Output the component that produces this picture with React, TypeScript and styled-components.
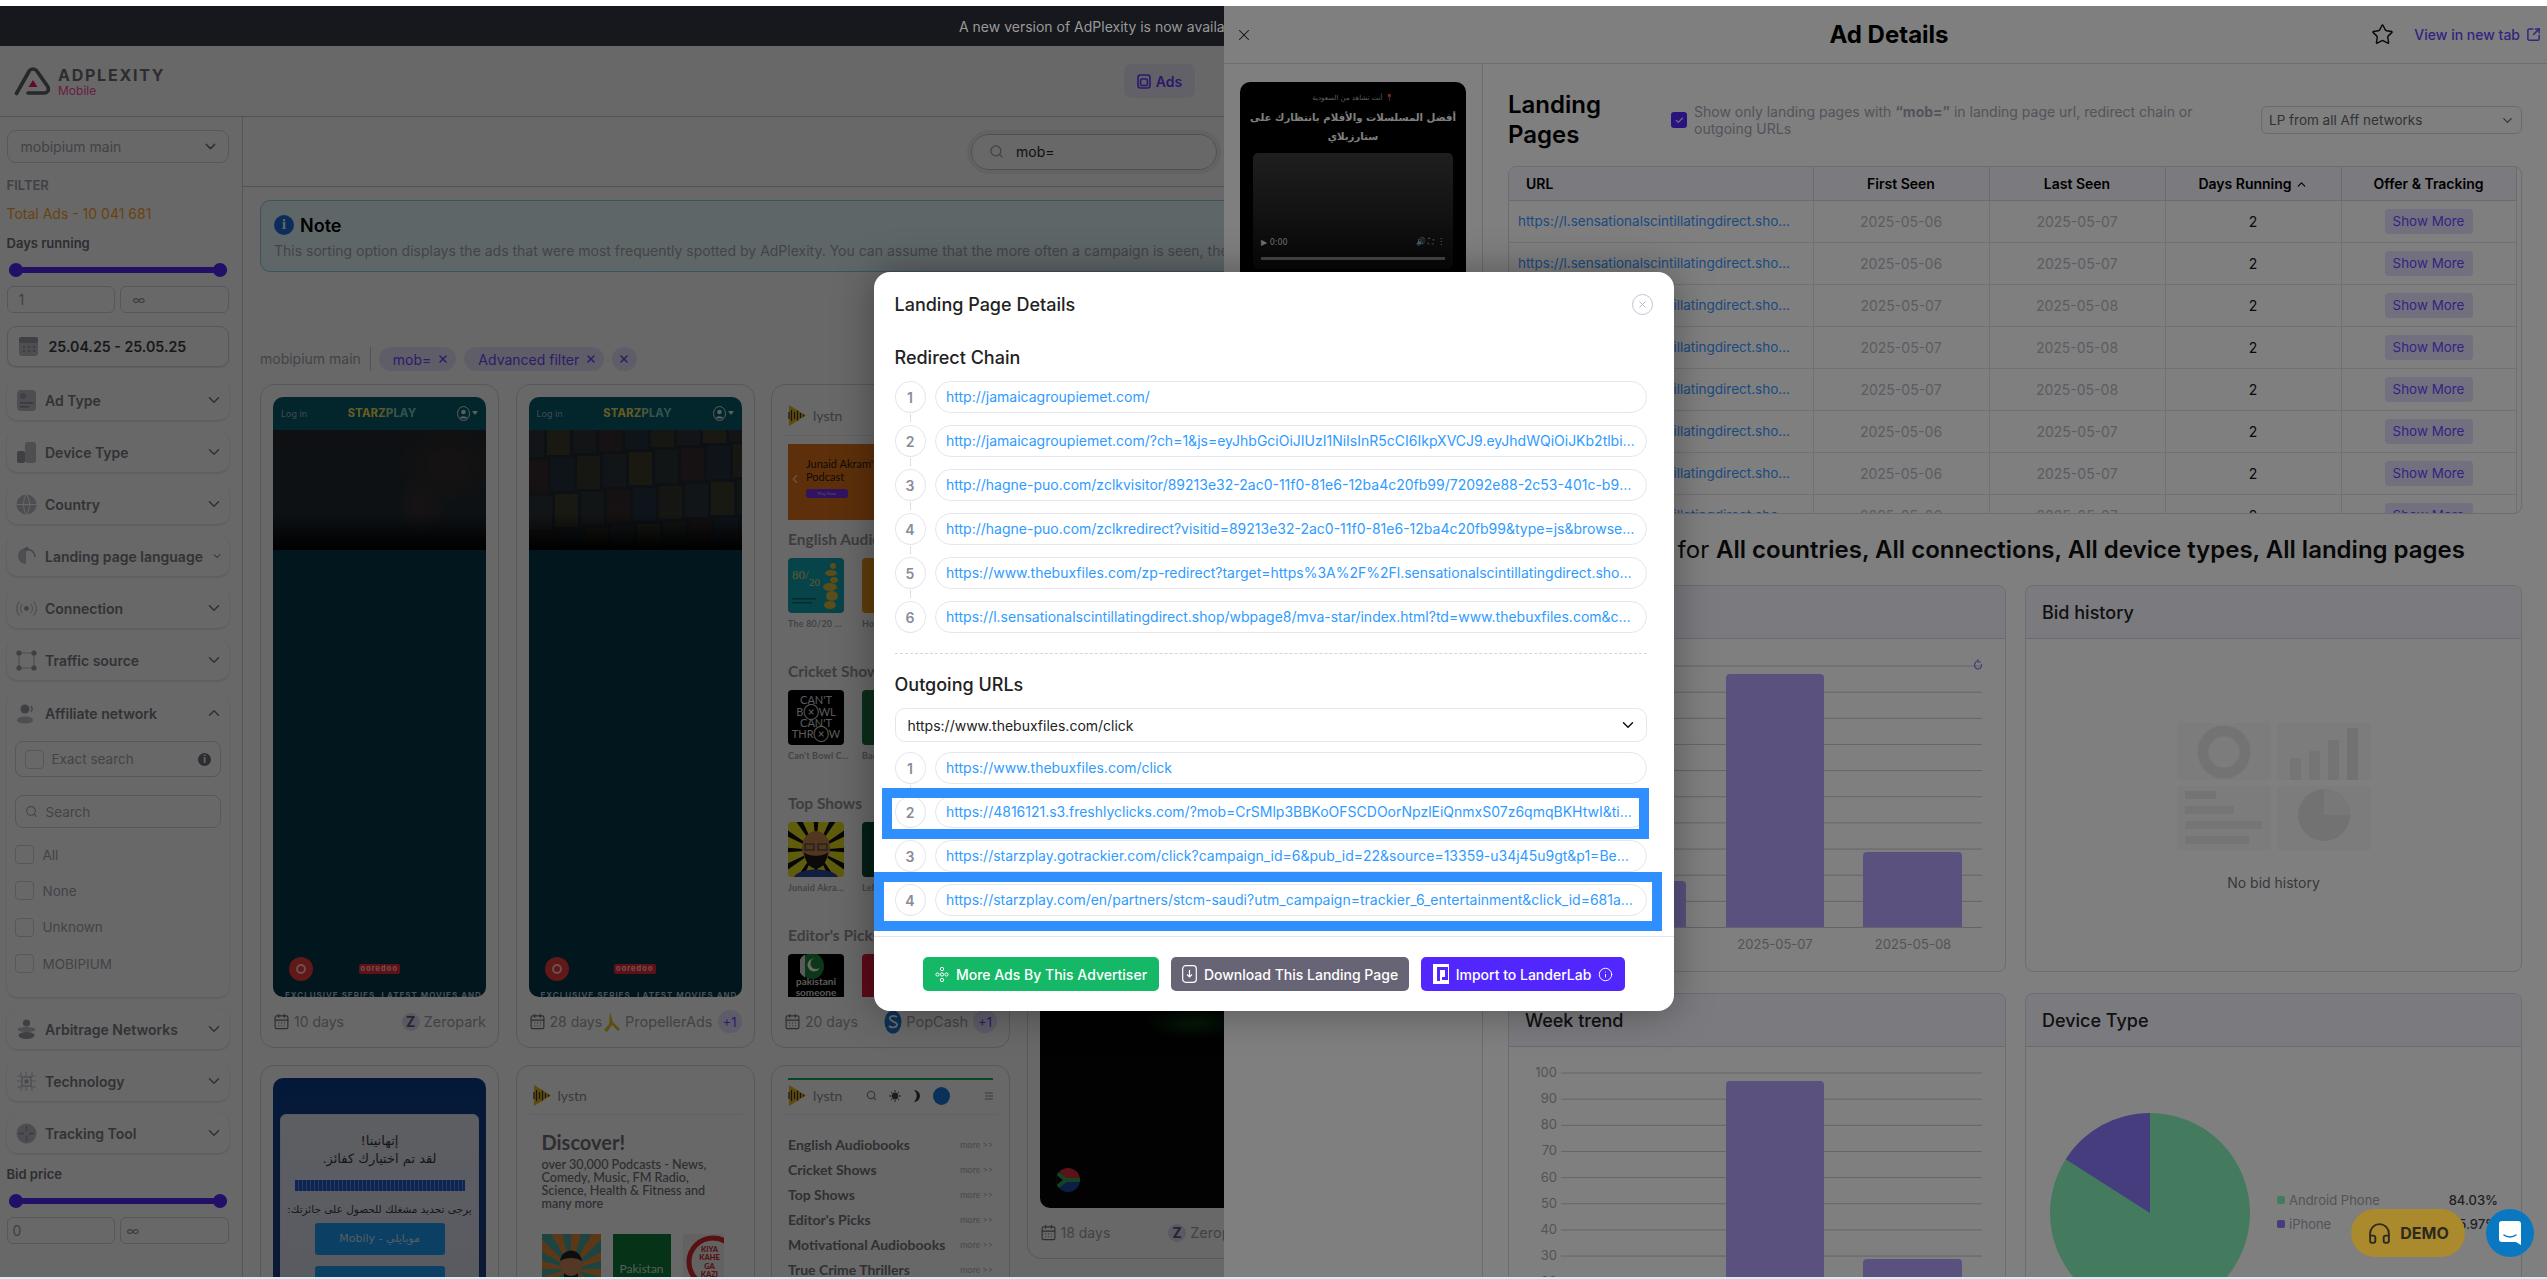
import React from 'react';
import styled, { createGlobalStyle } from 'styled-components';
import { ChevronDown, ChevronUp, ChevronLeft, Search, X, Star, SquareArrowOutUpRight, Headphones, CalendarDays, Info, ChevronUp as SortUp } from 'lucide-react';

const Global = createGlobalStyle`
  html, body { margin: 0; padding: 0; background: #fff; overflow: hidden; }
  * { box-sizing: border-box; }
  #root { font-family: Inter, "Noto Sans", sans-serif; font-size: 14px; color: #111; }
`;

const Viewport = styled.div`position: relative; width: 2547px; height: 1271px; margin-top: 6px; overflow: hidden; background: #fff;`;
const BottomStrip = styled.div`height: 2px; background: #d6edf6;`;
const LeftPage = styled.div`width: 2547px; height: 1271px; display: flex; flex-direction: column; padding-top: 40px; background: #fff;`;
const LeftDim = styled.div`position: absolute; inset: 0; background: rgba(0,0,0,.18);`;
const Banner = styled.div`position: absolute; top: 0; left: 0; width: 1224px; height: 40px; overflow: hidden; background: #17171e; color: #999; display: flex; align-items: center; padding-left: 959px; font-size: 14px; white-space: nowrap;`;

const Header = styled.header`height: 71px; flex: none; display: grid; grid-template-columns: 1124px 71px; align-items: center; border-bottom: 1px solid #c8c8ce;`;
const Brand = styled.div`display: flex; align-items: center; gap: 6px; padding-left: 14px;`;
const BrandText = styled.div`display: flex; flex-direction: column;`;
const BrandName = styled.div`font-size: 16px; font-weight: 700; letter-spacing: 1.75px; line-height: 18px; color: #6e6e78;`;
const BrandSub = styled.div`font-size: 12px; line-height: 13px; color: #ff4a9f;`;
const AdsButton = styled.div`height: 34px; border-radius: 7px; background: #f0eeff; display: flex; align-items: center; justify-content: center; gap: 5px; color: #6a3cff; font-weight: 600; font-size: 14px;`;

const Body = styled.div`flex: 1; display: flex; min-height: 0;`;
const Sidebar = styled.aside`width: 243px; flex: none; border-right: 1px solid #d0d0d8; padding: 13px 13px 0 6.5px; display: flex; flex-direction: column;`;
const Select = styled.div`height: 33px; flex: none; border: 1px solid #d5d5de; border-radius: 9px; display: flex; align-items: center; justify-content: space-between; padding: 0 9px 0 13px; color: #a2a2b0; font-size: 14px;`;
const FilterLabel = styled.div`margin-top: 13px; font-size: 13px; line-height: 18px; font-weight: 600; color: #a0a0ac;`;
const TotalAds = styled.div`margin-top: 11px; line-height: 18px; font-size: 14px; color: #ffa52a;`;
const RangeLabel = styled.div<{ $top: number }>`margin-top: ${p => p.$top}px; line-height: 18px; font-size: 13px; font-weight: 600; color: #6f6f7a;`;
const SliderBox = styled.div`margin: 11px 0 0 0; height: 14px; padding: 0 2.5px; display: flex; align-items: center;`;
const SliderTrack = styled.div`flex: 1; height: 6px; border-radius: 3px; background: #5227ff; display: flex; align-items: center; justify-content: space-between;`;
const SliderKnob = styled.div`width: 14px; height: 14px; border-radius: 50%; background: #5227ff;`;
const RangeInputs = styled.div`margin-top: 9px; display: grid; grid-template-columns: 1fr 1fr; gap: 5px;`;
const RangeInput = styled.div<{ $pad: number }>`height: 27px; border: 1px solid #d5d5de; border-radius: 6px; display: flex; align-items: center; padding-left: ${p => p.$pad}px; font-size: 14px; color: #9a9aa4;`;
const DateBox = styled.div`margin-top: 13px; height: 41px; flex: none; border: 1px solid #d5d5de; border-radius: 9px; box-shadow: 0 1px 2px rgba(0,0,0,.1); display: flex; align-items: center; gap: 10px; padding-left: 10px; font-weight: 600; font-size: 14.2px; color: #3c3c44;`;
const Accordion = styled.div<{ $top: number; $h?: number }>`margin-top: ${p => p.$top}px; height: ${p => p.$h ?? 40}px; flex: none; border-radius: 10px; box-shadow: 0 1px 3px rgba(0,0,0,.16); background: #fff;`;
const AccordionHead = styled.div`height: 40px; display: flex; align-items: center; padding: 0 6px 0 9.5px; gap: 8px;`;
const AccordionLabel = styled.div`flex: 1; font-size: 14px; font-weight: 600; color: #7c7c86; white-space: nowrap;`;
const SoftBox = styled.div<{ $top: number; $h: number }>`margin: ${p => p.$top}px 8px 0; height: ${p => p.$h}px; border: 1px solid #d5d5de; border-radius: 8px; display: flex; align-items: center; padding: 0 9px; gap: 8px; color: #a4a4b0; font-size: 13.5px;`;
const Check = styled.div`width: 19px; height: 19px; flex: none; border: 1px solid #d5d5de; border-radius: 4px;`;
const BoxText = styled.span`flex: 1;`;
const CheckList = styled.div`margin: 17px 8px 0; display: flex; flex-direction: column; gap: 17px;`;
const CheckRow = styled.div`height: 19.3px; display: flex; align-items: center; gap: 9px; color: #a4a4b0; font-size: 13.5px;`;
const RoundInfo = styled.div`width: 13px; height: 13px; border-radius: 50%; background: #70707a; color: #fff; font-size: 10px; font-weight: 700; display: flex; align-items: center; justify-content: center;`;
const IcoSvg = styled.svg`flex: none;`;

const Main = styled.main`flex: 1; min-width: 0; display: flex; flex-direction: column; overflow: hidden;`;
const SearchRow = styled.div`height: 70px; flex: none; border-bottom: 1px solid #c8c8d0; display: flex; align-items: center; padding-left: 728px;`;
const SearchPill = styled.div`width: 246px; height: 36px; border: 1px solid #c4c4ca; border-radius: 18px; box-shadow: 0 0 0 4px #f1f1f1; display: flex; align-items: center; gap: 12px; padding-left: 17px; font-size: 14px; color: #2a2a2a;`;
const Note = styled.div`margin: 13px 0 0 17px; width: 2400px; height: 72px; flex: none; background: #e8f9ff; border: 1px solid #8bcbe8; border-radius: 10px; padding: 12px 13px;`;
const NoteHead = styled.div`display: flex; align-items: center; gap: 6px; height: 24px; font-size: 18px; font-weight: 600; color: #000;`;
const NoteIcon = styled.div`width: 20px; height: 20px; border-radius: 50%; background: #1f6fe0; color: #fff; font: 700 14px "Liberation Serif", serif; display: flex; align-items: center; justify-content: center;`;
const NoteText = styled.div`margin-top: 5px; color: #a6a6ac; font-size: 14px; white-space: nowrap;`;
const ChipRow = styled.div`margin: 75px 0 0 17px; height: 24px; flex: none; display: flex; align-items: center; gap: 8px;`;
const ChipLead = styled.div`padding-right: 9px; height: 24px; line-height: 24px; border-right: 1px solid #c8c8d0; color: #a4a4ae; font-size: 14px;`;
const Chip = styled.div<{ $pad: number }>`height: 24px; border-radius: 12px; background: #eae6ff; display: flex; align-items: center; gap: 6px; padding: 0 7px 0 ${p => p.$pad}px; font-size: 14px; color: #7044ff;`;
const Columns = styled.div`margin: 12.5px 0 0 17px; display: flex; gap: 16.5px; align-items: flex-start;`;
const Column = styled.div`width: 239px; flex: none; display: flex; flex-direction: column; gap: 17px;`;
const AdCard = styled.article`width: 239px; flex: none; border: 1px solid #d7d7e0; border-radius: 14px; padding: 12px 12px 0; background: #fff;`;
const Shot = styled.div<{ $h: number }>`position: relative; height: ${p => p.$h}px; border-radius: 10px; overflow: hidden; display: flex; flex-direction: column;`;
const CongratsShot = styled(Shot)`background: linear-gradient(180deg, #0a3e8e, #143f86 60px, #3a3a70);`;
const CardFoot = styled.div`height: 50px; display: flex; align-items: center; justify-content: space-between; color: #a2a2aa; font-size: 14px; white-space: nowrap;`;
const FootGroup = styled.div`display: flex; align-items: center; gap: 4px;`;
const NetIcon = styled.div`width: 18px; height: 18px; border-radius: 50%; background: #dedcf5; color: #5c5c78; font-weight: 700; font-size: 14px; display: flex; align-items: center; justify-content: center;`;
const NetName = styled.span`font-size: 14.5px;`;
const PlusOne = styled.div`width: 24px; height: 23px; margin-left: 1px; border-radius: 12px; background: #e4e1ff; color: #7044ff; display: flex; align-items: center; justify-content: center; font-size: 13px;`;

const StarTop = styled.div`height: 33px; flex: none; background: #085d70; display: flex; align-items: center; justify-content: space-between; padding: 0 8px; color: #98b7bd; font-size: 9px;`;
const StarLogo = styled.div`font-size: 11.4px; font-weight: 800; background: linear-gradient(90deg, #f4df55 0 45%, #72c8c0 75%); -webkit-background-clip: text; background-clip: text; color: transparent;`;
const StarUser = styled.div`display: flex; align-items: center; gap: 2px; color: #d8e8ea;`;
const Caret = styled.div`width: 0; height: 0; border: 3px solid transparent; border-top: 4px solid #d8e8ea; margin-top: 3px;`;
const Hero = styled.div<{ $v: number }>`height: 120px; flex: none; position: relative; overflow: hidden; background: ${p => p.$v === 1 ? 'radial-gradient(50px 40px at 82% 30%, #3a2e2c, transparent), radial-gradient(26px 30px at 70% 62%, #3c3030, transparent), linear-gradient(180deg, #23292e, #202c34)' : 'linear-gradient(180deg, #23292e, #202c34)'}; `;
const HeroFade = styled.div`position: absolute; inset: 0; background: linear-gradient(180deg, transparent 70%, #000 100%);`;
const HeroSvg = styled.svg`position: absolute; inset: 0; width: 100%; height: 100%; opacity: .5;`;
const Teal = styled.div`flex: 1; background: #05364a; display: flex; flex-direction: column; justify-content: flex-end; align-items: stretch; overflow: hidden;`;
const OperatorRow = styled.div`display: flex; align-items: center; justify-content: space-between; padding: 0 86px 0 16px;`;
const RedBadge = styled.div`width: 24px; height: 24px; border-radius: 50%; background: #f03a3e; display: flex; align-items: center; justify-content: center;`;
const RedInner = styled.div`width: 10px; height: 10px; border-radius: 50%; border: 2px solid #ffc5c5;`;
const Ooredoo = styled.div`height: 10px; padding: 0 2px; background: #ee2a36; border-radius: 2px; color: #ffc9cc; font-size: 7.5px; font-weight: 700; letter-spacing: 1px; line-height: 10px;`;
const Exclusive = styled.div`margin-top: 9px; height: 7px; line-height: 10px; padding-left: 12px; white-space: nowrap; color: #b8d4dc; font-size: 8px; font-weight: 600; letter-spacing: 1px;`;

const LystnBody = styled.div<{ $h: number }>`height: ${p => p.$h}px; overflow: hidden; padding: 0 4px; position: relative; font-family: Lato, Inter, sans-serif;`;
const LystnHead = styled.div<{ $h: number }>`height: ${p => p.$h}px; margin: 0 -4px; padding: 0 4px; display: flex; align-items: center; gap: 6px; border-bottom: 1px solid #eeeef2; font-size: 14px; color: #8f8f96;`;
const LystnSpacer = styled.div`flex: 1;`;
const Promo = styled.div`margin-top: 8px; height: 76px; width: 240px; background: #e3761c; padding: 13px 0 0 18px; color: #2f1b08; font-size: 11px; line-height: 13px; position: relative;`;
const PromoArrow = styled(ChevronLeft)`position: absolute; left: 0; top: 28px;`;
const PromoPill = styled.div`margin-top: 6px; width: 42px; height: 9px; border-radius: 3px; background: #7b2ff0; color: #c8b8ff; font-size: 4.5px; line-height: 9px; text-align: center;`;
const ShelfTitle = styled.div<{ $top: number }>`margin-top: ${p => p.$top}px; height: 20px; line-height: 20px; font-size: 15.5px; font-weight: 700; color: #96969e; white-space: nowrap;`;
const Tiles = styled.div`margin-top: 9px; display: flex; gap: 18px;`;
const Tile = styled.div`width: 56px; flex: none;`;
const TileArt = styled.div<{ $bg: string }>`position: relative; width: 56px; height: 55px; border-radius: 4px; overflow: hidden; background: ${p => p.$bg}; color: #eee; display: flex; flex-direction: column; align-items: center; justify-content: center; text-align: center;`;
const TileLabel = styled.div`margin-top: 4px; height: 14px; line-height: 14px; font-size: 9px; font-weight: 700; letter-spacing: .2px; color: #a4a4ac; white-space: nowrap;`;
const CantText = styled.div`font-size: 11px; line-height: 11.4px; color: #dcdcdc;`;
const PickText = styled.div`font-size: 10px; line-height: 11px; font-weight: 700; color: #dcdcdc;`;
const FlagBadge = styled.svg`position: absolute; left: 12px; top: -1px;`;
const ZaFlag = styled.svg`position: absolute; left: 16px; bottom: 16px;`;

const CongratsPanel = styled.div`margin: 36px 7px 0; flex: 1; background: linear-gradient(180deg, #e4e8f2, #c0c8e0); border: 1px solid #d8dcf0; border-radius: 6px 6px 0 0; padding: 17px 12px 0; display: flex; flex-direction: column; align-items: center; font-family: "DejaVu Sans", sans-serif; color: #3a3a42;`;
const ArabicHead = styled.div`font-size: 13px; line-height: 18px; text-align: center; font-weight: 400;`;
const Progress = styled.div`margin-top: 12px; width: 170px; height: 11px; background: repeating-linear-gradient(90deg, #1d5fd0 0 3px, #6d92d6 3px 4px);`;
const ArabicLine = styled.div`margin-top: 12px; font-size: 10.5px; white-space: nowrap;`;
const OperatorBtn = styled.div<{ $top: number }>`margin-top: ${p => p.$top}px; width: 130px; height: 32px; flex: none; border-radius: 3px; background: #1b9cf5; color: #d0e4f2; display: flex; align-items: center; justify-content: center; font-size: 11px;`;

const Discover = styled.div`margin-top: 15px; padding-left: 9px; font-size: 20px; font-weight: 700; line-height: 24px; color: #727278;`;
const DiscoverText = styled.div`margin-top: 4px; padding-left: 9px; font-size: 12.6px; line-height: 13px; white-space: nowrap; font-weight: 500; color: #6e6e76;`;
const DiscoverArt = styled.div`margin-top: 24px; padding-left: 9px; display: flex; gap: 12px;`;
const ArtTile = styled.div<{ $bg: string; $w: number }>`width: ${p => p.$w}px; height: 70px; background: ${p => p.$bg}; color: #c8e8d4; font-size: 12px; display: flex; align-items: center; justify-content: center; flex: none; position: relative; overflow: hidden;`;
const KazText = styled.div`position: absolute; left: 14px; top: 12px; width: 26px; color: #d8282e; font-size: 7.5px; line-height: 8.5px; font-weight: 900; text-align: center;`;
const KazRing = styled.svg`position: absolute; inset: 0;`;
const GreenRule = styled.div`position: absolute; left: 4px; right: 4px; top: 0; height: 2px; background: #18a860;`;
const ListRow = styled.div`height: 25px; display: flex; align-items: center; justify-content: space-between; color: #76767e; font-size: 14px; font-weight: 700;`;
const More = styled.span`font-size: 9px; font-weight: 400; color: #b4b4bc;`;
const ListWrap = styled.div`margin-top: 17px;`;
const HeadIcons = styled.div`display: flex; align-items: center; gap: 12px;`;
const UserDot = styled.div`width: 17px; height: 18px; border-radius: 50%; background: #1b78d8; margin-right: 23px;`;

const HiddenCardBody = styled.div`height: 180px;`;
const NightShot = styled.div`position: relative; height: 600px; border-radius: 10px; overflow: hidden; background: radial-gradient(50px 16px at 72% 415px, #0c3a12, transparent), #050505;`;

const Drawer = styled.section`position: absolute; left: 1224px; top: 0; width: 1323px; height: 1271px; background: #fff; display: flex; flex-direction: column;`;
const DrawerHead = styled.div`height: 58px; flex: none; display: grid; grid-template-columns: 1fr auto 1fr; align-items: center; border-bottom: 1px solid #d8dce8; padding: 0 6px 0 11px;`;
const DrawerTitle = styled.h2`margin: 0 0 0 2px; font-size: 24px; font-weight: 700; color: #000;`;
const DrawerTools = styled.div`display: flex; align-items: center; justify-content: flex-end; gap: 20px;`;
const NewTab = styled.div`display: flex; align-items: center; gap: 6px; font-size: 14px; color: #6a48ff; font-weight: 500;`;
const DrawerBody = styled.div`flex: 1; display: flex; min-height: 0;`;
const VideoCol = styled.div`width: 259px; flex: none; border-right: 1px solid #d8d8e0; padding: 18px 16px 0;`;
const Phone = styled.div`height: 620px; background: #000; border-radius: 10px; padding: 12px 10px 0; display: flex; flex-direction: column; align-items: center; font-family: "DejaVu Sans", sans-serif; color: #fff;`;
const PhoneSmall = styled.div`font-size: 7px; color: #bbb;`;
const PhoneHead = styled.div`margin-top: 6px; font-size: 10.2px; line-height: 19px; font-weight: 700; text-align: center;`;
const Player = styled.div`margin-top: 7px; width: 200px; height: 116px; flex: none; border-radius: 5px; background: linear-gradient(180deg, #3d3d3d, #262626 50%, #0e0e0e); display: flex; flex-direction: column; justify-content: flex-end; padding: 0 8px 9px; font-size: 8px; color: #d8d8d8;`;
const PlayerRow = styled.div`display: flex; align-items: center; gap: 6px;`;
const PlayerTrack = styled.div`margin-top: 10px; height: 3px; background: #888;`;
const Grow = styled.span`flex: 1;`;
const Content = styled.div`flex: 1; min-width: 0; padding: 26px 25px 0;`;
const LpRow = styled.div`height: 60px; display: flex; align-items: center;`;
const LpTitle = styled.h3`margin: 0; width: 163px; flex: none; font-size: 24px; line-height: 30px; font-weight: 600; color: #000;`;
const LpCheck = styled.div`width: 16px; height: 16px; flex: none; border-radius: 3px; background: #5227ff; color: #fff; display: flex; align-items: center; justify-content: center; font-size: 11px; margin-right: 7px;`;
const LpNote = styled.div`width: 520px; flex: none; font-size: 14px; line-height: 17px; color: #a6a6b4;`;
const LpSelect = styled.div`margin-left: auto; width: 261px; height: 28px; border: 1px solid #d5d5de; border-radius: 6px; display: flex; align-items: center; justify-content: space-between; padding: 0 6px 0 7px; font-size: 13.5px; color: #666;`;
const TableWrap = styled.div`margin-top: 16px; height: 348px; border: 1px solid #d8d8e2; border-radius: 8px; overflow: hidden; padding-right: 6px;`;
const Table = styled.table`width: 1007px; border-collapse: collapse; table-layout: fixed;`;
const Th = styled.th<{ $w: number; $left?: boolean }>`width: ${p => p.$w}px; height: 33px; padding: 0 ${p => (p.$left ? 17 : 0)}px; background: #f6f4ff; border-right: 1px solid #d5d5de; border-bottom: 1px solid #d5d5de; text-align: ${p => (p.$left ? 'left' : 'center')}; font-size: 14px; font-weight: 600; color: #000;`;
const Td = styled.td`height: 42px; padding: 0; text-align: center; border-right: 1px solid #e2e2ea; border-bottom: 1px solid #e2e2ea; font-size: 14px; color: #b8b8c6;`;
const UrlTd = styled(Td)`text-align: left; padding: 0 19px 0 9px; font-size: 13.5px; color: #3894ff; white-space: nowrap; overflow: hidden; text-overflow: ellipsis;`;
const DaysTd = styled(Td)`color: #111;`;
const ShowMore = styled.div`display: inline-flex; align-items: center; justify-content: center; width: 88px; height: 25px; border-radius: 4px; background: #e4e0ff; color: #6a48ff; font-size: 13.4px;`;
const SortWrap = styled.span`display: inline-flex; vertical-align: -2px; margin-left: 3px;`;
const StatsTitle = styled.h3`margin: 21px 0 20px; padding-right: 57px; text-align: right; font-size: 24px; line-height: 30px; font-weight: 400; color: #111; white-space: nowrap; overflow: hidden;`;
const StatsBold = styled.b`font-weight: 600;`;
const StatGrid = styled.div`display: grid; grid-template-columns: 498px 497px; gap: 21px 19px;`;
const StatCard = styled.div`height: 387px; border: 1px solid #d8d8e4; border-radius: 8px; overflow: hidden;`;
const StatHead = styled.div`height: 53px; background: #f6f4ff; border-bottom: 1px solid #d5d5de; display: flex; align-items: center; padding-left: 16px; font-size: 18px; font-weight: 500; color: #222;`;
const EmptyState = styled.div`height: 333px; display: flex; flex-direction: column; align-items: center; padding-top: 84px; color: #888; font-size: 14px;`;
const EmptyText = styled.div`margin-top: 23px; color: #707078;`;
const PieBody = styled.div`display: flex; padding: 66px 0 0 24px;`;
const Legend = styled.div`margin: 79px 0 0 27px; width: 221px; display: flex; flex-direction: column; gap: 8px;`;
const LegendRow = styled.div`height: 16px; display: flex; align-items: center; gap: 4px; font-size: 13px; color: #a6a6b4;`;
const LegendDot = styled.span<{ $c: string }>`width: 8px; height: 8px; border-radius: 2px; background: ${p => p.$c};`;
const LegendVal = styled.span`margin-left: auto; font-weight: 500; color: #444;`;
const ChartSvg = styled.svg`display: block;`;

const ModalDim = styled.div`position: absolute; inset: 0; background: rgba(0,0,0,.5);`;
const Modal = styled.div`position: absolute; left: 874px; top: 266px; width: 800px; height: 739px; background: #fff; border-radius: 16px; box-shadow: 0 0 40px rgba(0,0,0,.35); display: flex; flex-direction: column;`;
const ModalHead = styled.div`height: 64px; flex: none; display: flex; align-items: center; justify-content: space-between; padding: 0 21.5px 0 20.5px;`;
const ModalTitle = styled.div`font-size: 18px; font-weight: 500; color: #222;`;
const CloseCircle = styled.div`width: 21px; height: 21px; border-radius: 50%; border: 1px solid #c4c4d4; color: #b0b0c0; display: flex; align-items: center; justify-content: center;`;
const ModalBody = styled.div`flex: 1; padding: 11px 27px 0 20.5px;`;
const SectionTitle = styled.div`height: 22px; line-height: 22px; font-size: 18px; font-weight: 500; color: #222;`;
const Chain = styled.div`display: flex; flex-direction: column; gap: 12px;`;
const RedirectChain = styled(Chain)`margin-top: 12px;`;
const ChainRow = styled.div`position: relative; display: flex; height: 32px; gap: 9px;`;
const Step = styled.div<{ $link: boolean }>`position: relative; width: 31px; height: 32px; flex: none; border: 1.5px solid #e6e6ee; border-radius: 50%; display: flex; align-items: center; justify-content: center; color: #8a8a9c; font-size: 14px; font-weight: 600;
  &::after { content: ''; display: ${p => (p.$link ? 'block' : 'none')}; position: absolute; left: 14px; top: 32px; width: 1px; height: 8px; background: #dcdce4; }`;
const UrlPill = styled.div`flex: 1; min-width: 0; height: 32px; line-height: 29px; border: 1.5px solid #e6e6ee; border-radius: 16px; padding: 0 10px 0 10.5px; font-size: 14px; color: #2f9bff; white-space: nowrap; overflow: hidden; text-overflow: ellipsis;`;
const Highlight = styled.div<{ $t: number; $r: number; $b: number; $l: number }>`position: absolute; top: ${p => p.$t}px; right: ${p => p.$r}px; bottom: ${p => p.$b}px; left: ${p => p.$l}px; border: 10px solid #2f8fff; pointer-events: none;`;
const Dashed = styled.div`margin-top: 20px; border-top: 1px dashed #d4d4dc;`;
const OutTitle = styled(SectionTitle)`margin-top: 20px;`;
const OutSelect = styled.div`margin: 12px 0 10px; height: 34px; border: 1.5px solid #e6e6ee; border-radius: 10px; display: flex; align-items: center; justify-content: space-between; padding: 0 9px 0 12px; font-size: 14px; color: #222;`;
const ModalFoot = styled.div`height: 75px; flex: none; border-top: 1px solid #e4e4ec; display: flex; align-items: center; justify-content: center; gap: 12px;`;
const FootBtn = styled.div<{ $bg: string; $w: number }>`width: ${p => p.$w}px; height: 34px; border-radius: 5px; background: ${p => p.$bg}; color: #fff; display: flex; align-items: center; justify-content: center; gap: 7px; font-size: 14px; font-weight: 500; white-space: nowrap;`;

const Demo = styled.div`position: absolute; right: 82px; bottom: 20px; width: 114px; height: 48px; border-radius: 24px; background: #aa8a2c; display: flex; align-items: center; justify-content: center; gap: 8px; font-size: 16px; font-weight: 700; color: #2c2a20;`;
const Chat = styled.div`position: absolute; right: 13px; bottom: 20px; width: 48px; height: 48px; border-radius: 50%; background: #0a78c0; display: flex; align-items: center; justify-content: center;`;

const Ico = ({ d }: { d: React.ReactNode }) => (
  <IcoSvg width="21" height="21" viewBox="0 0 21 21" fill="#bcbcc8">{d}</IcoSvg>
);

const icons: Record<string, React.ReactNode> = {
  ad: <><rect x="1" y="0" width="19" height="21" rx="4" /><circle cx="7" cy="6" r="3" fill="#9a9aa8" /><rect x="4" y="12" width="13" height="1.6" fill="#8a8a98" /><rect x="4" y="16" width="9" height="1.6" fill="#8a8a98" /></>,
  device: <><rect x="9" y="0" width="11" height="21" rx="3" /><rect x="1" y="9" width="8" height="12" rx="2" fill="#9a9aa8" /></>,
  globe: <><circle cx="10.5" cy="10.5" r="10" /><path d="M10.5 .5c-4 5-4 15 0 20m0-20c4 5 4 15 0 20M.5 10.5h20" stroke="#fff" strokeWidth="1" fill="none" /></>,
  lang: <><path d="M2 10a8 8 0 0 1 8-8v16a8 8 0 0 1-8-8z" /><path d="M12 1l-3 2 3 2M10 3c5 0 9 3 9 8" stroke="#a8a8b4" strokeWidth="1.5" fill="none" /></>,
  conn: <><circle cx="10.5" cy="10.5" r="2.4" fill="#a0a0ae" /><path d="M6.5 6a6 6 0 0 0 0 9M14.5 6a6 6 0 0 1 0 9M3.5 3.5a10 10 0 0 0 0 14M17.5 3.5a10 10 0 0 1 0 14" stroke="#c4c4d0" strokeWidth="1.3" fill="none" /></>,
  traffic: <><path d="M3 3h15v15H3z" fill="none" stroke="#c0c0cc" strokeWidth="1.2" /><circle cx="3" cy="3" r="2.6" fill="#9a9aa8" /><circle cx="18" cy="3" r="2.6" fill="#9a9aa8" /><circle cx="3" cy="18" r="2.6" fill="#9a9aa8" /><circle cx="18" cy="18" r="2.6" fill="#9a9aa8" /></>,
  aff: <><circle cx="9" cy="6" r="4.5" fill="#9a9aa8" /><ellipse cx="9" cy="17" rx="8" ry="3.6" /><path d="M15 3a5 5 0 0 1 0 6" stroke="#a8a8b4" strokeWidth="1.4" fill="none" /></>,
  arb: <><circle cx="10.5" cy="4" r="3.6" fill="#9a9aa8" /><ellipse cx="10.5" cy="10.5" rx="9" ry="2.6" /><ellipse cx="10.5" cy="16.5" rx="8" ry="3.4" fill="#9a9aa8" /></>,
  tech: <><rect x="6" y="6" width="9" height="9" fill="none" stroke="#b0b0bc" strokeWidth="1.2" /><rect x="8.5" y="8.5" width="4" height="4" fill="#b0b0bc" /><path d="M1 5h5M1 10h5M1 16h5M15 5h5M15 10h5M15 16h5M5 1v5M10 1v5M16 1v5M5 15v5M10 15v5M16 15v5" stroke="#c4c4d0" strokeWidth="1.1" fill="none" /></>,
  track: <><circle cx="10.5" cy="10.5" r="10" /><path d="M10.5 3v5M10.5 13v5M3 10.5h5M13 10.5h5" stroke="#8e8e9a" strokeWidth="1.3" /></>,
};

const Logo = () => (
  <svg width="38" height="30" viewBox="0 0 38 30" fill="none">
    <path d="M2.5 27.5 L15.5 4.5 Q19 1.5 22.5 4.5 L34 21 Q35.5 26 31 27 H14" stroke="#636368" strokeWidth="3.6" strokeLinecap="round" strokeLinejoin="round" />
    <path d="M19 14 L23.5 21 H14.5 Z" fill="#f0187c" strokeLinejoin="round" />
  </svg>
);

const Calendar = () => <CalendarDays size={17} strokeWidth={1.6} color="#6e6e7c" />;

const LystnMark = () => (
  <svg width="19" height="23" viewBox="0 0 19 23">
    <path d="M1 1 L18 11.5 L1 22 Z" fill="#e7b820" />
    <path d="M1 8v7M3.5 6v11M6.5 8v7M9.5 6.5v10M12.5 9v5M15.5 10.5v2" stroke="#333" strokeWidth="1.2" />
  </svg>
);

const StarAd = ({ v }: { v: number }) => (
  <Shot $h={600}>
    <StarTop>
      <span>Log in</span>
      <StarLogo>STARZPLAY</StarLogo>
      <StarUser>
        <svg width="13" height="15" viewBox="0 0 13 15" fill="none"><ellipse cx="6.5" cy="7.5" rx="6" ry="7" stroke="#d8e8ea" /><circle cx="6.5" cy="6" r="2.3" fill="#d8e8ea" /><path d="M2.5 12.5c1-3 7-3 8 0" fill="#d8e8ea" /></svg>
        <Caret />
      </StarUser>
    </StarTop>
    <Hero $v={v}>
      {v === 2 && (
        <HeroSvg viewBox="0 0 213 120" preserveAspectRatio="none">
          {Array.from({ length: 36 }).map((_, i) => (
            <rect key={i} x={(i % 9) * 26 - 8 + ((i / 9) | 0) * 4} y={((i / 9) | 0) * 36 - 6 - (i % 9) * 2} width="23" height="33" fill={['#3b3f45', '#4b4430', '#2c3a52', '#4a2c30', '#3a3f3c', '#58502a'][(i * 5) % 6]} />
          ))}
        </HeroSvg>
      )}
      <HeroFade />
    </Hero>
    <Teal>
      <OperatorRow>
        <RedBadge><RedInner /></RedBadge>
        <Ooredoo>ooredoo</Ooredoo>
      </OperatorRow>
      <Exclusive>EXCLUSIVE SERIES, LATEST MOVIES AND</Exclusive>
    </Teal>
  </Shot>
);

const Foot = ({ days, net, icon, plus }: { days: string; net: string; icon: React.ReactNode; plus?: boolean }) => (
  <CardFoot>
    <FootGroup><Calendar /><span>{days}</span></FootGroup>
    <FootGroup>{icon}<NetName>{net}</NetName>{plus && <PlusOne>+1</PlusOne>}</FootGroup>
  </CardFoot>
);

const Propeller = () => (
  <svg width="18" height="22" viewBox="0 0 18 22"><path d="M7 1l3 10 7 7-2 2-6-6-5 7-3-2 5-6z" fill="#e0c52c" /></svg>
);
const PopCash = () => (
  <svg width="18" height="24" viewBox="0 0 18 24"><ellipse cx="9" cy="12" rx="8.5" ry="11.5" fill="#1f78d0" /><path d="M13 7c-3-2-8-1-7 2s8 3 7 6-6 3-8 1" stroke="#fff" strokeWidth="2" fill="none" /></svg>
);

const Shelf = ({ title, top, a, b, labelA, labelB, artA, artB, bare }: { title: string; top: number; a: string; b: string; labelA: string; labelB: string; artA?: React.ReactNode; artB?: React.ReactNode; bare?: boolean }) => (
  <>
    <ShelfTitle $top={top}>{title}</ShelfTitle>
    <Tiles>
      <Tile><TileArt $bg={a}>{artA}</TileArt>{!bare && <TileLabel>{labelA}</TileLabel>}</Tile>
      <Tile><TileArt $bg={b}>{artB}</TileArt>{!bare && <TileLabel>{labelB}</TileLabel>}</Tile>
    </Tiles>
  </>
);

const EightyTwenty = () => (
  <svg width="56" height="55" viewBox="0 0 56 55">
    <text x="4" y="21" fontFamily="Liberation Serif, serif" fontSize="13" fill="#e8d878">80/</text>
    <text x="21" y="28" fontFamily="Liberation Serif, serif" fontSize="11" fill="#e8d878">20</text>
    <ellipse cx="45" cy="8" rx="3" ry="3" fill="#e0c040" /><ellipse cx="43" cy="15" rx="6" ry="3" fill="#e0c040" /><ellipse cx="46" cy="22" rx="4" ry="3" fill="#e0c040" /><ellipse cx="42" cy="29" rx="7" ry="4" fill="#e0c040" /><ellipse cx="44" cy="38" rx="6" ry="5" fill="#e0c040" /><ellipse cx="42" cy="47" rx="6" ry="4" fill="#e0c040" />
    <rect x="4" y="40" width="24" height="1.5" fill="#0a6a70" /><rect x="4" y="44" width="20" height="1.5" fill="#0a6a70" />
  </svg>
);

const Junaid = () => (
  <svg width="56" height="55" viewBox="0 0 56 55">
    <rect width="56" height="55" fill="#e8e41e" />
    {[0, 30, 60, 90, 120, 150, 180, 210, 240, 270, 300, 330].map(a => (
      <path key={a} d="M28 28 L24 -20 L32 -20 Z" fill="#111" transform={`rotate(${a} 28 28)`} />
    ))}
    <ellipse cx="28" cy="26" rx="14" ry="17" fill="#c98850" />
    <path d="M16 30c2 22 22 22 24 0-4 5-20 5-24 0z" fill="#1a1a1a" />
    <rect x="17" y="22" width="9" height="6" fill="none" stroke="#333" /><rect x="30" y="22" width="9" height="6" fill="none" stroke="#333" />
    <path d="M6 55c4-10 40-10 44 0z" fill="#2a4aa0" />
  </svg>
);

const PkFlag = () => (
  <FlagBadge width="24" height="26" viewBox="0 0 24 26">
    <ellipse cx="12" cy="13" rx="12" ry="13" fill="#1f8a3d" />
    <path d="M5 1.5a12 13 0 0 0 0 23z" fill="#ddd" />
    <circle cx="14" cy="12" r="6.5" fill="#fff" /><circle cx="16" cy="10.5" r="5.5" fill="#1f8a3d" />
  </FlagBadge>
);

const Bars = ({ labels, bars, top, ticks }: { labels?: boolean; bars: number[][]; top: number; ticks?: boolean }) => (
  <ChartSvg width="498" height="333" viewBox="0 0 498 333">
    {Array.from({ length: 11 }).map((_, i) => (
      <line key={i} x1="52" x2="473" y1={top + i * 26.15} y2={top + i * 26.15} stroke="#c9c9d1" strokeWidth="1" />
    ))}
    {ticks && [100, 90, 80, 70, 60, 50, 40, 30, 20, 10].map((v, i) => (
      <text key={v} x="48" y={top + 4 + i * 26.15} textAnchor="end" fontSize="13" fill="#a6a6b0">{v}</text>
    ))}
    {bars.map(([x, y, w, b], i) => (
      <path key={i} d={`M${x} ${b}V${y + 4}q0-4 4-4h${w - 8}q4 0 4 4V${b}z`} fill="#b4a2ff" />
    ))}
    {labels && (
      <>
        <text x="266" y="310" textAnchor="middle" fontSize="13" fill="#a6a6b0">2025-05-07</text>
        <text x="404" y="310" textAnchor="middle" fontSize="13" fill="#a6a6b0">2025-05-08</text>
        <path d="M469 22a3.5 4 0 1 0 3.5 3M469 20v3h3" stroke="#8b78f0" strokeWidth="1.2" fill="none" />
      </>
    )}
  </ChartSvg>
);

const EmptyArt = () => (
  <svg width="194" height="128" viewBox="0 0 194 128">
    <rect width="94" height="57" rx="4" fill="#f9f9f9" />
    <ellipse cx="47" cy="29" rx="21" ry="21" fill="none" stroke="#e6e6e6" strokeWidth="11" />
    <rect x="100" width="94" height="57" rx="4" fill="#f9f9f9" />
    <rect x="113" y="35" width="11" height="22" fill="#eaeaea" /><rect x="132" y="28" width="11" height="29" fill="#eaeaea" /><rect x="151" y="17" width="11" height="40" fill="#e8e8e8" /><rect x="170" y="5" width="11" height="52" fill="#e4e4e4" />
    <rect y="63" width="94" height="65" rx="4" fill="#f9f9f9" />
    <rect x="8" y="68" width="31" height="8" fill="#e8e8e8" /><rect x="8" y="83" width="49" height="8" fill="#eaeaea" /><rect x="8" y="98" width="77" height="8" fill="#eaeaea" /><rect x="8" y="113" width="64" height="8" fill="#eaeaea" />
    <rect x="100" y="63" width="94" height="65" rx="4" fill="#f9f9f9" />
    <ellipse cx="147" cy="92" rx="26" ry="26" fill="#e4e4e4" /><path d="M147 92V66a26 26 0 0 1 26 26z" fill="#f0f0f0" />
  </svg>
);

const STATS = [
  ['2025-05-06', '2025-05-07'], ['2025-05-06', '2025-05-07'], ['2025-05-07', '2025-05-08'], ['2025-05-07', '2025-05-08'],
  ['2025-05-07', '2025-05-08'], ['2025-05-06', '2025-05-07'], ['2025-05-06', '2025-05-07'], ['2025-05-06', '2025-05-07'],
];
const REDIRECTS = [
  'http://jamaicagroupiemet.com/',
  'http://jamaicagroupiemet.com/?ch=1&js=eyJhbGciOiJIUzI1NiIsInR5cCI6IkpXVCJ9.eyJhdWQiOiJKb2tlbiIsImV4cCI6MTc0Nj',
  'http://hagne-puo.com/zclkvisitor/89213e32-2ac0-11f0-81e6-12ba4c20fb99/72092e88-2c53-401c-b9ab-ce12aa33ff01',
  'http://hagne-puo.com/zclkredirect?visitid=89213e32-2ac0-11f0-81e6-12ba4c20fb99&type=js&browser=Chrome&x=1',
  'https://www.thebuxfiles.com/zp-redirect?target=https%3A%2F%2Fl.sensationalscintillatingdirect.shop%2Fwbpage8',
  'https://l.sensationalscintillatingdirect.shop/wbpage8/mva-star/index.html?td=www.thebuxfiles.com&cMickid=1a2b3',
];
const OUTGOING = [
  'https://www.thebuxfiles.com/click',
  'https://4816121.s3.freshlyclicks.com/?mob=CrSMlp3BBKoOFSCDOorNpzlEiQnmxS07z6qmqBKHtwI&tid=1234567',
  'https://starzplay.gotrackier.com/click?campaign_id=6&pub_id=22&source=13359-u34j45u9gt&p1=BeMW234567',
  'https://starzplay.com/en/partners/stcm-saudi?utm_campaign=trackier_6_entertainment&click_id=681a9b2c',
];
const ACC1 = [['Ad Type', 'ad'], ['Device Type', 'device'], ['Country', 'globe'], ['Landing page language', 'lang'], ['Connection', 'conn'], ['Traffic source', 'traffic']];
const ACC2 = [['Arbitrage Networks', 'arb'], ['Technology', 'tech'], ['Tracking Tool', 'track']];
const LIST = ['English Audiobooks', 'Cricket Shows', 'Top Shows', "Editor's Picks", 'Motivational Audiobooks', 'True Crime Thrillers'];

export default function App() {
  return (
    <>
      <Global />
      <Viewport>
        <LeftPage>
          <Header>
            <Brand>
              <Logo />
              <BrandText>
                <BrandName>ADPLEXITY</BrandName>
                <BrandSub>Mobile</BrandSub>
              </BrandText>
            </Brand>
            <AdsButton>
              <svg width="14" height="15" viewBox="0 0 14 15" fill="none" stroke="#6a3cff" strokeWidth="1.6"><rect x="1" y="1" width="12" height="13" rx="2.5" /><rect x="3.6" y="5" width="6.8" height="6.5" rx="1" /></svg>
              Ads
            </AdsButton>
          </Header>
          <Body>
            <Sidebar>
              <Select>mobipium main<ChevronDown size={17} color="#77777f" /></Select>
              <FilterLabel>FILTER</FilterLabel>
              <TotalAds>Total Ads - 10 041 681</TotalAds>
              <RangeLabel $top={11}>Days running</RangeLabel>
              <SliderBox><SliderTrack><SliderKnob /><SliderKnob /></SliderTrack></SliderBox>
              <RangeInputs><RangeInput $pad={11}>1</RangeInput><RangeInput $pad={11}>∞</RangeInput></RangeInputs>
              <DateBox><Ico d={<><rect x="1" y="3" width="19" height="17" rx="3" /><rect x="1" y="1" width="19" height="6" rx="2" fill="#9a9aa8" /><path d="M5 11h2M10 11h2M15 11h2M5 15h2M10 15h2M15 15h2" stroke="#88889a" strokeWidth="1.3" /></>} />25.04.25 - 25.05.25</DateBox>
              {ACC1.map(([label, icon], i) => (
                <Accordion key={label} $top={i === 0 ? 13 : 12}>
                  <AccordionHead><Ico d={icons[icon]} /><AccordionLabel>{label}</AccordionLabel><ChevronDown size={18} color="#77777f" /></AccordionHead>
                </Accordion>
              ))}
              <Accordion $top={13} $h={304}>
                <AccordionHead><Ico d={icons.aff} /><AccordionLabel>Affiliate network</AccordionLabel><ChevronUp size={18} color="#77777f" /></AccordionHead>
                <SoftBox $top={8} $h={36}><Check /><BoxText>Exact search</BoxText><RoundInfo>i</RoundInfo></SoftBox>
                <SoftBox $top={18} $h={33}><Search size={13} color="#a4a4b0" /><BoxText>Search</BoxText></SoftBox>
                <CheckList>
                  {['All', 'None', 'Unknown', 'MOBIPIUM'].map(t => <CheckRow key={t}><Check />{t}</CheckRow>)}
                </CheckList>
              </Accordion>
              {ACC2.map(([label, icon]) => (
                <Accordion key={label} $top={12}>
                  <AccordionHead><Ico d={icons[icon]} /><AccordionLabel>{label}</AccordionLabel><ChevronDown size={18} color="#77777f" /></AccordionHead>
                </Accordion>
              ))}
              <RangeLabel $top={12}>Bid price</RangeLabel>
              <SliderBox><SliderTrack><SliderKnob /><SliderKnob /></SliderTrack></SliderBox>
              <RangeInputs><RangeInput $pad={5}>0</RangeInput><RangeInput $pad={5}>∞</RangeInput></RangeInputs>
            </Sidebar>
            <Main>
              <SearchRow><SearchPill><Search size={15} color="#a0a0a8" />mob=</SearchPill></SearchRow>
              <Note>
                <NoteHead><NoteIcon>i</NoteIcon>Note</NoteHead>
                <NoteText>This sorting option displays the ads that were most frequently spotted by AdPlexity. You can assume that the more often a campaign is seen, the more successful it is for the advertiser.</NoteText>
              </Note>
              <ChipRow>
                <ChipLead>mobipium main</ChipLead>
                <Chip $pad={14}>mob=<X size={12} strokeWidth={3} /></Chip>
                <Chip $pad={14}>Advanced filter<X size={12} strokeWidth={3} /></Chip>
                <Chip $pad={6}><X size={12} strokeWidth={3} /></Chip>
              </ChipRow>
              <Columns>
                <Column>
                  <AdCard><StarAd v={1} /><Foot days="10 days" net="Zeropark" icon={<NetIcon>Z</NetIcon>} /></AdCard>
                  <AdCard>
                    <CongratsShot $h={600}>
                      <CongratsPanel>
                        <ArabicHead dir="rtl">إتهانينا!<br />لقد تم اختيارك كفائز.</ArabicHead>
                        <Progress />
                        <ArabicLine dir="rtl">يرجى تحديد مشغلك للحصول على جائزتك:</ArabicLine>
                        <OperatorBtn $top={8}>Mobily - موبايلي</OperatorBtn>
                        <OperatorBtn $top={11}>Zain - زين</OperatorBtn>
                      </CongratsPanel>
                    </CongratsShot>
                  </AdCard>
                </Column>
                <Column>
                  <AdCard><StarAd v={2} /><Foot days="28 days" net="PropellerAds" icon={<Propeller />} plus /></AdCard>
                  <AdCard>
                    <LystnBody $h={400}>
                      <LystnHead $h={37}><LystnMark />lystn</LystnHead>
                      <Discover>Discover!</Discover>
                      <DiscoverText>over 30,000 Podcasts - News,<br />Comedy, Music, FM Radio,<br />Science, Health &amp; Fitness and<br />many more</DiscoverText>
                      <DiscoverArt>
                        <ArtTile $bg="repeating-conic-gradient(#e58a3a 0 15deg,#4aa8a0 15deg 30deg)" $w={59}>
                          <svg width="32" height="44" viewBox="0 0 32 44"><ellipse cx="16" cy="18" rx="11" ry="14" fill="#c88a5c" /><path d="M5 14c2-14 20-14 22 0-6-4-16-4-22 0z" fill="#222" /><path d="M9 26c4 4 10 4 14 0v4c-4 3-10 3-14 0z" fill="#222" /></svg>
                        </ArtTile>
                        <ArtTile $bg="#0f7a3c" $w={58}>Pakistan</ArtTile>
                        <ArtTile $bg="#efefef" $w={41}>
                          <KazRing width="41" height="70" viewBox="0 0 41 70" fill="none"><circle cx="30" cy="28" r="24" stroke="#d8282e" strokeWidth="5" /></KazRing>
                          <KazText>KIYA KAHE GA KAZI</KazText>
                        </ArtTile>
                      </DiscoverArt>
                    </LystnBody>
                  </AdCard>
                </Column>
                <Column>
                  <AdCard>
                    <LystnBody $h={600}>
                      <LystnHead $h={39}><LystnMark />lystn<LystnSpacer /><Search size={11} color="#8f8f96" strokeWidth={3} /></LystnHead>
                      <Promo><PromoArrow size={14} color="#f0d8c0" />Junaid Akram's<br />Podcast<PromoPill>Play Now</PromoPill></Promo>
                      <Shelf title="English Audiobooks" top={9} a="#12a6b4" b="#e8981a" labelA="The 80/20 ..." labelB="How to Talk" artA={<EightyTwenty />} />
                      <Shelf title="Cricket Shows" top={30} a="#000" b="#1f6e40" labelA="Can't Bowl C..." labelB="Bad Pitch" artA={<CantText>CAN'T<br />B⊗WL<br />CAN'T<br />THR⊗W</CantText>} />
                      <Shelf title="Top Shows" top={30} a="#e8e41e" b="#0c4a3c" labelA="Junaid Akra..." labelB="Lehja" artA={<Junaid />} />
                      <Shelf title="Editor's Picks" top={30} a="#000" b="#e01c3c" labelA="" labelB="" bare artA={<><PickText>a<br />pakistani<br />someone</PickText><PkFlag /></>} />
                    </LystnBody>
                    <Foot days="20 days" net="PopCash" icon={<PopCash />} plus />
                  </AdCard>
                  <AdCard>
                    <LystnBody $h={400}>
                      <GreenRule />
                      <LystnHead $h={37}>
                        <LystnMark />lystn<LystnSpacer />
                        <HeadIcons>
                          <Search size={11} color="#8f8f96" strokeWidth={3} />
                          <svg width="12" height="12" viewBox="0 0 12 12"><circle cx="6" cy="6" r="3.4" fill="#4a4a50" /><path d="M6 0v2M6 10v2M0 6h2M10 6h2M2 2l1 1M9 9l1 1M2 10l1-1M9 3l1-1" stroke="#4a4a50" /></svg>
                          <svg width="8" height="12" viewBox="0 0 8 12"><path d="M1 0a6 6 0 0 1 0 12 8 8 0 0 0 0-12z" fill="#3a3a40" /></svg>
                          <UserDot />
                          <svg width="8" height="8" viewBox="0 0 8 8" stroke="#8f8f96"><path d="M0 1h8M0 4h8M0 7h8" /></svg>
                        </HeadIcons>
                      </LystnHead>
                      <ListWrap>
                        {LIST.map(t => <ListRow key={t}>{t}<More>more &gt;&gt;</More></ListRow>)}
                      </ListWrap>
                    </LystnBody>
                  </AdCard>
                </Column>
                <Column>
                  <AdCard><HiddenCardBody /></AdCard>
                  <AdCard>
                    <NightShot>
                      <ZaFlag width="24" height="24" viewBox="0 0 24 24">
                        <defs><clipPath id="za"><circle cx="12" cy="12" r="12" /></clipPath></defs>
                        <g clipPath="url(#za)"><rect width="24" height="12" fill="#e0303a" /><rect y="12" width="24" height="12" fill="#1f4aa8" /><path d="M0 0 L12 12 L0 24z" fill="#111" /><path d="M-1 3 L10 12 -1 21M10 12H24" stroke="#2fa85a" strokeWidth="4" fill="none" /></g>
                      </ZaFlag>
                    </NightShot>
                    <Foot days="18 days" net="Zeropark" icon={<NetIcon>Z</NetIcon>} />
                  </AdCard>
                </Column>
              </Columns>
            </Main>
          </Body>
        </LeftPage>
        <LeftDim />
        <Drawer>
          <DrawerHead>
            <X size={18} color="#222" strokeWidth={1.4} />
            <DrawerTitle>Ad Details</DrawerTitle>
            <DrawerTools>
              <Star size={23} strokeWidth={1.5} color="#111" />
              <NewTab>View in new tab<SquareArrowOutUpRight size={15} strokeWidth={2.4} /></NewTab>
            </DrawerTools>
          </DrawerHead>
          <DrawerBody>
            <VideoCol>
              <Phone>
                <PhoneSmall dir="rtl">📍 أنت تشاهد من السعودية</PhoneSmall>
                <PhoneHead dir="rtl">أفضل المسلسلات والأفلام بانتظارك على<br />ستارزبلاي</PhoneHead>
                <Player>
                  <PlayerRow>▶ 0:00<Grow />🔊 ⛶ ⋮</PlayerRow>
                  <PlayerTrack />
                </Player>
              </Phone>
            </VideoCol>
            <Content>
              <LpRow>
                <LpTitle>Landing<br />Pages</LpTitle>
                <LpCheck>✓</LpCheck>
                <LpNote>Show only landing pages with <b>“mob=”</b> in landing page url, redirect chain or outgoing URLs</LpNote>
                <LpSelect>LP from all Aff networks<ChevronDown size={15} color="#666" /></LpSelect>
              </LpRow>
              <TableWrap>
                <Table>
                  <thead>
                    <tr>
                      <Th $w={304} $left>URL</Th>
                      <Th $w={176}>First Seen</Th>
                      <Th $w={176}>Last Seen</Th>
                      <Th $w={176}>Days Running<SortWrap><SortUp size={13} /></SortWrap></Th>
                      <Th $w={175}>Offer &amp; Tracking</Th>
                    </tr>
                  </thead>
                  <tbody>
                    {STATS.map(([a, b], i) => (
                      <tr key={i}>
                        <UrlTd>https://l.sensationalscintillatingdirect.shop/wbpage8/mva-star/index.html</UrlTd>
                        <Td>{a}</Td>
                        <Td>{b}</Td>
                        <DaysTd>2</DaysTd>
                        <Td><ShowMore>Show More</ShowMore></Td>
                      </tr>
                    ))}
                  </tbody>
                </Table>
              </TableWrap>
              <StatsTitle>Statistics for <StatsBold>All countries, All connections, All device types, All landing pages</StatsBold></StatsTitle>
              <StatGrid>
                <StatCard>
                  <StatHead>Daily trend</StatHead>
                  <Bars labels top={27} bars={[[79, 242, 98, 288], [217, 35, 98, 288], [354, 213, 99, 288]]} />
                </StatCard>
                <StatCard>
                  <StatHead>Bid history</StatHead>
                  <EmptyState><EmptyArt /><EmptyText>No bid history</EmptyText></EmptyState>
                </StatCard>
                <StatCard>
                  <StatHead>Week trend</StatHead>
                  <Bars ticks top={26} bars={[[217, 34, 98, 300], [354, 212, 99, 300]]} />
                </StatCard>
                <StatCard>
                  <StatHead>Device Type</StatHead>
                  <PieBody>
                    <svg width="200" height="200" viewBox="0 0 200 200">
                      <circle cx="100" cy="100" r="100" fill="#88f4bc" />
                      <path d="M100 100 L100 0 A100 100 0 0 0 15.7 46.3 Z" fill="#8c7aff" />
                    </svg>
                    <Legend>
                      <LegendRow><LegendDot $c="#88f4bc" />Android Phone<LegendVal>84.03%</LegendVal></LegendRow>
                      <LegendRow><LegendDot $c="#8c7aff" />iPhone<LegendVal>15.97%</LegendVal></LegendRow>
                    </Legend>
                  </PieBody>
                </StatCard>
              </StatGrid>
            </Content>
          </DrawerBody>
        </Drawer>
        <ModalDim />
        <Banner>A new version of AdPlexity is now available. Please reload the page to get the latest features and fixes.</Banner>
        <Demo><Headphones size={25} strokeWidth={1.8} />DEMO</Demo>
        <Chat>
          <svg width="22" height="24" viewBox="0 0 22 24"><path d="M3 0h16a3 3 0 0 1 3 3v21l-5-3H3a3 3 0 0 1-3-3V3a3 3 0 0 1 3-3z" fill="#fff" /><path d="M5 14c3 2.5 9 2.5 12 0" stroke="#0a78c0" strokeWidth="1.5" fill="none" strokeLinecap="round" /></svg>
        </Chat>
        <Modal>
          <ModalHead>
            <ModalTitle>Landing Page Details</ModalTitle>
            <CloseCircle><X size={11} /></CloseCircle>
          </ModalHead>
          <ModalBody>
            <SectionTitle>Redirect Chain</SectionTitle>
            <RedirectChain>
              {REDIRECTS.map((u, i) => (
                <ChainRow key={i}><Step $link={i < REDIRECTS.length - 1}>{i + 1}</Step><UrlPill>{u}</UrlPill></ChainRow>
              ))}
            </RedirectChain>
            <Dashed />
            <OutTitle>Outgoing URLs</OutTitle>
            <OutSelect>https://www.thebuxfiles.com/click<ChevronDown size={18} color="#111" /></OutSelect>
            <Chain>
              {OUTGOING.map((u, i) => (
                <ChainRow key={i}>
                  <Step $link={i < OUTGOING.length - 1}>{i + 1}</Step>
                  <UrlPill>{u}</UrlPill>
                  {i === 1 && <Highlight $t={-8} $r={-2} $b={-11} $l={-12.5} />}
                  {i === 3 && <Highlight $t={-12} $r={-15} $b={-15} $l={-20.5} />}
                </ChainRow>
              ))}
            </Chain>
          </ModalBody>
          <ModalFoot>
            <FootBtn $bg="#14b866" $w={236}>
              <svg width="14" height="17" viewBox="0 0 14 17" fill="none" stroke="#fff" strokeWidth="1"><circle cx="7" cy="3" r="1.7" /><circle cx="7" cy="14" r="1.7" /><circle cx="2.5" cy="8.5" r="1.6" /><circle cx="11.5" cy="8.5" r="1.6" /><circle cx="7" cy="8.5" r="1.6" /></svg>
              More Ads By This Advertiser
            </FootBtn>
            <FootBtn $bg="#676476" $w={238}>
              <svg width="15" height="18" viewBox="0 0 15 18" fill="none" stroke="#fff" strokeWidth="1.2"><rect x=".7" y=".7" width="13.6" height="16.6" rx="3" /><path d="M7.5 5v7M5 9.5l2.5 2.5 2.5-2.5" /></svg>
              Download This Landing Page
            </FootBtn>
            <FootBtn $bg="#5227ff" $w={204}>
              <svg width="16" height="20" viewBox="0 0 16 20"><rect width="16" height="20" fill="#fff" /><path d="M4 3v14h3V6h5v7H9v3h6V3z" fill="#5227ff" /></svg>
              Import to LanderLab
              <Info size={15} strokeWidth={1.5} />
            </FootBtn>
          </ModalFoot>
        </Modal>
      </Viewport>
      <BottomStrip />
    </>
  );
}
